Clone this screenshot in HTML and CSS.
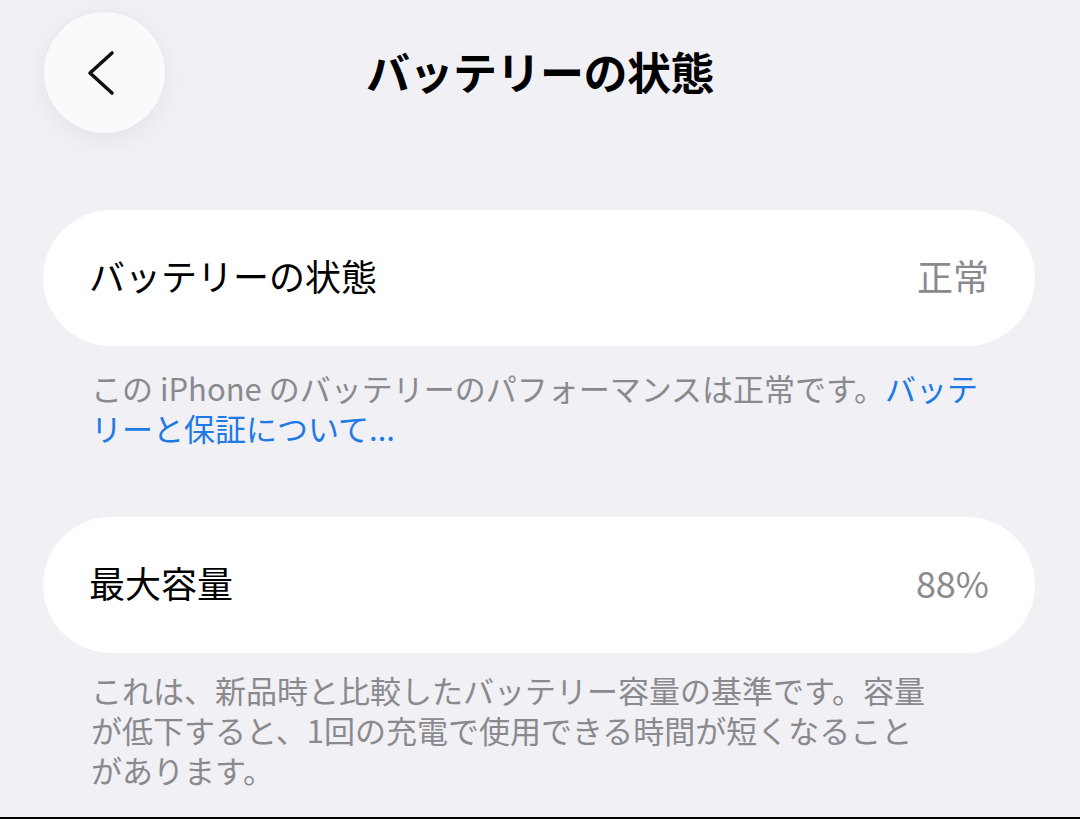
FILE: index.html
```html
<!DOCTYPE html>
<html lang="ja">
<head>
    <meta charset="UTF-8">
    <meta name="viewport" content="width=device-width, initial-scale=1.0">
    <title>バッテリーの状態</title>
    <link rel="stylesheet" href="styles.css">
</head>
<body>
    <div class="screen">
        <!-- Navigation bar -->
        <header class="nav-bar">
            <button class="back-button" type="button" aria-label="戻る">
                <svg width="30" height="46" viewBox="0 0 30 46">
                    <path d="M25 3 L3 23 L25 43" fill="none" stroke="#111" stroke-width="3.6" stroke-linecap="round" stroke-linejoin="round"/>
                </svg>
            </button>
            <h1 class="nav-title">バッテリーの状態</h1>
            <div></div>
        </header>

        <main class="settings">
            <!-- Battery health -->
            <div class="settings-row">
                <span class="row-label">バッテリーの状態</span>
                <span class="row-value">正常</span>
            </div>
            <p class="settings-note">
                この iPhone のバッテリーのパフォーマンスは正常です。<a href="#">バッテ<br>リーと保証について...</a>
            </p>

            <!-- Maximum capacity -->
            <div class="settings-row second">
                <span class="row-label">最大容量</span>
                <span class="row-value">88%</span>
            </div>
            <p class="settings-note tight">
                これは、新品時と比較したバッテリー容量の基準です。容量<br>が低下すると、1回の充電で使用できる時間が短くなること<br>があります。
            </p>
        </main>

        <div class="bottom-edge"></div>
    </div>
</body>
</html>
```

FILE: styles.css
```css
:root {
    --bg-color: #f0f0f5;
    --card-color: #ffffff;
    --text-dark: #000000;
    --text-muted: #8a8a8e;
    --link-color: #2079e6;
}

* {
    margin: 0;
    padding: 0;
    box-sizing: border-box;
}

body {
    background: var(--bg-color);
    font-family: "Noto Sans CJK JP", "Noto Sans", sans-serif;
    color: var(--text-dark);
}

.screen {
    display: flex;
    flex-direction: column;
    min-height: 100vh;
}

.nav-bar {
    display: grid;
    grid-template-columns: 1fr auto 1fr;
    align-items: center;
    padding: 12px 44px 0 44px;
}

.back-button {
    width: 121px;
    height: 121px;
    border-radius: 50%;
    border: none;
    background: #fafafd;
    box-shadow: 0 6px 28px rgba(0, 0, 0, 0.06), 0 0 2px rgba(0, 0, 0, 0.03);
    display: flex;
    align-items: center;
    justify-content: center;
    padding-right: 6px;
    cursor: pointer;
}

.nav-title {
    font-size: 44px;
    font-weight: 700;
    line-height: 1;
    letter-spacing: -0.5px;
    margin-top: -4px;
}

.settings {
    padding: 0 45px 0 43px;
}

.settings-row {
    display: flex;
    justify-content: space-between;
    align-items: center;
    height: 136px;
    margin-top: 77px;
    padding: 0 46px 6px 46px;
    background: var(--card-color);
    border-radius: 68px;
}

.settings-row.second {
    margin-top: 69px;
}

.row-label {
    font-size: 36px;
    line-height: 1;
}

.row-value {
    font-size: 36px;
    line-height: 1;
    color: var(--text-muted);
}

.settings-note {
    padding: 22px 30px 0 48px;
    font-size: 31px;
    line-height: 40px;
    color: var(--text-muted);
}

.settings-note.tight {
    padding-top: 17px;
}

.settings-note a {
    color: var(--link-color);
    text-decoration: none;
}

.bottom-edge {
    margin-top: auto;
    height: 2px;
    background: #000;
}
```
